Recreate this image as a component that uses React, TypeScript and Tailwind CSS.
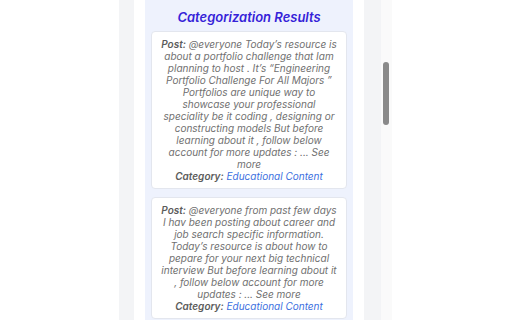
const results = [
  {
    post: "@everyone Today\u2019s resource is about a portfolio challenge that Iam planning to host . It\u2019s \u201cEngineering Portfolio Challenge For All Majors \u201d Portfolios are unique way to showcase your professional speciality be it coding , designing or constructing models But before learning about it , follow below account for more updates : ... See more",
    category: "Educational Content",
  },
  {
    post: "@everyone from past few days I hav been posting about career and job search specific information. Today\u2019s resource is about how to pepare for your next big technical interview But before learning about it , follow below account for more updates : ... See more",
    category: "Educational Content",
  },
];

function ResultCard({ post, category }: { post: string; category: string }) {
  return (
    <div className="rounded-[4px] border border-[#e3e6ee] bg-white px-[7px] pt-[6px] pb-[6px] text-center text-[10px] italic leading-[12px] text-[#707070]">
      <p>
        <span className="font-semibold text-[#5c5c5c]">Post:</span> {post}
      </p>
      <p>
        <span className="font-semibold text-[#5c5c5c]">Category:</span>{" "}
        <span className="text-[#3b6fe0]">{category}</span>
      </p>
    </div>
  );
}

export default function App() {
  return (
    <div
      className="flex h-[320px] w-[512px] overflow-hidden bg-white pl-[119px]"
      style={{ fontFamily: "Inter, 'Noto Sans', sans-serif" }}
    >
      <div className="flex h-full bg-[#f3f4f6] pl-[15px] pr-[17px]">
        <div className="h-full w-[230px] bg-white px-[11px]">
          <div className="h-full bg-[#eef2fd] px-[6px] pt-[8px]">
            <h2 className="text-center text-[13px] font-semibold italic leading-[18px] text-[#3522d8]">
              Categorization Results
            </h2>
            <div className="mt-[5px] flex flex-col gap-[8px]">
              {results.map((r, i) => (
                <ResultCard key={i} post={r.post} category={r.category} />
              ))}
            </div>
          </div>
        </div>
      </div>
      <div className="h-full w-[11px] bg-[#fafafa] pl-[2px] pt-[62px]">
        <div className="h-[63px] w-[6px] rounded-full bg-[#8a8a8a]" />
      </div>
    </div>
  );
}
